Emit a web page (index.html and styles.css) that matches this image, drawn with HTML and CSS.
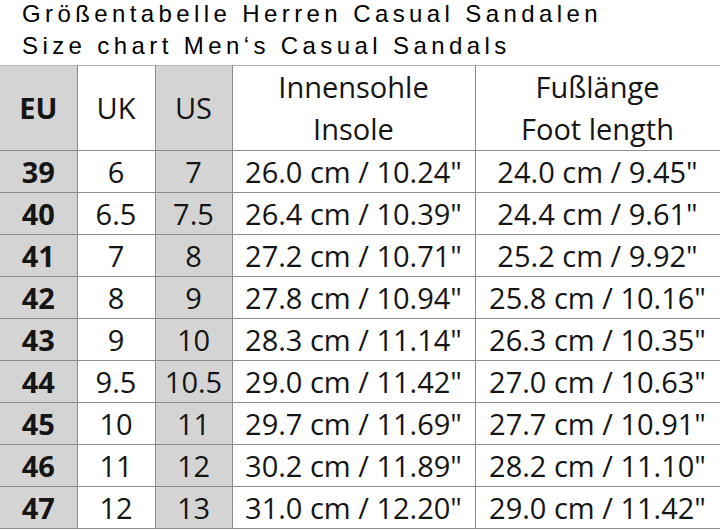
FILE: index.html
```html
<!DOCTYPE html>
<html lang="de">
<head>
<meta charset="utf-8">
<title>Größentabelle</title>
<link rel="stylesheet" href="styles.css">
</head>
<body>
<div class="title">
  <div>Größentabelle Herren Casual Sandalen</div>
  <div>Size chart Men‘s Casual Sandals</div>
</div>
<table class="chart">
  <colgroup>
    <col class="c-eu"><col class="c-uk"><col class="c-us"><col class="c-in"><col class="c-ft">
  </colgroup>
  <thead>
    <tr>
      <th class="gray bold">EU</th>
      <th>UK</th>
      <th class="gray">US</th>
      <th>Innensohle<br>Insole</th>
      <th>Fußlänge<br>Foot length</th>
    </tr>
  </thead>
  <tbody>
    <tr><td class="gray bold">39</td><td>6</td><td class="gray">7</td><td>26.0 cm / 10.24"</td><td>24.0 cm / 9.45"</td></tr>
    <tr><td class="gray bold">40</td><td>6.5</td><td class="gray">7.5</td><td>26.4 cm / 10.39"</td><td>24.4 cm / 9.61"</td></tr>
    <tr><td class="gray bold">41</td><td>7</td><td class="gray">8</td><td>27.2 cm / 10.71"</td><td>25.2 cm / 9.92"</td></tr>
    <tr><td class="gray bold">42</td><td>8</td><td class="gray">9</td><td>27.8 cm / 10.94"</td><td>25.8 cm / 10.16"</td></tr>
    <tr><td class="gray bold">43</td><td>9</td><td class="gray">10</td><td>28.3 cm / 11.14"</td><td>26.3 cm / 10.35"</td></tr>
    <tr><td class="gray bold">44</td><td>9.5</td><td class="gray">10.5</td><td>29.0 cm / 11.42"</td><td>27.0 cm / 10.63"</td></tr>
    <tr><td class="gray bold">45</td><td>10</td><td class="gray">11</td><td>29.7 cm / 11.69"</td><td>27.7 cm / 10.91"</td></tr>
    <tr><td class="gray bold">46</td><td>11</td><td class="gray">12</td><td>30.2 cm / 11.89"</td><td>28.2 cm / 11.10"</td></tr>
    <tr><td class="gray bold">47</td><td>12</td><td class="gray">13</td><td>31.0 cm / 12.20"</td><td>29.0 cm / 11.42"</td></tr>
  </tbody>
</table>
</body>
</html>
```
FILE: styles.css
```css
html, body {
  margin: 0;
  padding: 0;
  background: #ffffff;
}
body {
  width: 720px;
  height: 530px;
  overflow: hidden;
  color: #111;
}
.title {
  font-family: "Liberation Sans", Arial, sans-serif;
  font-size: 24px;
  letter-spacing: 4.4px;
  line-height: 32px;
  padding-left: 22px;
  margin-top: -2px;
  height: 67px;
  box-sizing: border-box;
  color: #000;
}
.chart {
  border-collapse: collapse;
  table-layout: fixed;
  width: 720px;
  font-family: "Open Sans", "Noto Sans", sans-serif;
  font-size: 29px;
  color: #151515;
}
.c-eu { width: 77px; }
.c-uk { width: 78px; }
.c-us { width: 77px; }
.c-in { width: 243px; }
.c-ft { width: 245px; }
.chart th, .chart td {
  border: 1px solid #8c8c8c;
  padding: 0;
  text-align: center;
  vertical-align: middle;
  font-weight: normal;
  white-space: nowrap;
}
.chart th:first-child, .chart td:first-child { border-left: none; }
.chart thead th {
  height: 83px;
  line-height: 42px;
  border-top-color: #b5b5b5;
}
.chart tbody td {
  height: 41px;
  line-height: 41px;
}
.gray { background: #d4d4d4; }
.chart .bold { font-weight: 700; }
```
